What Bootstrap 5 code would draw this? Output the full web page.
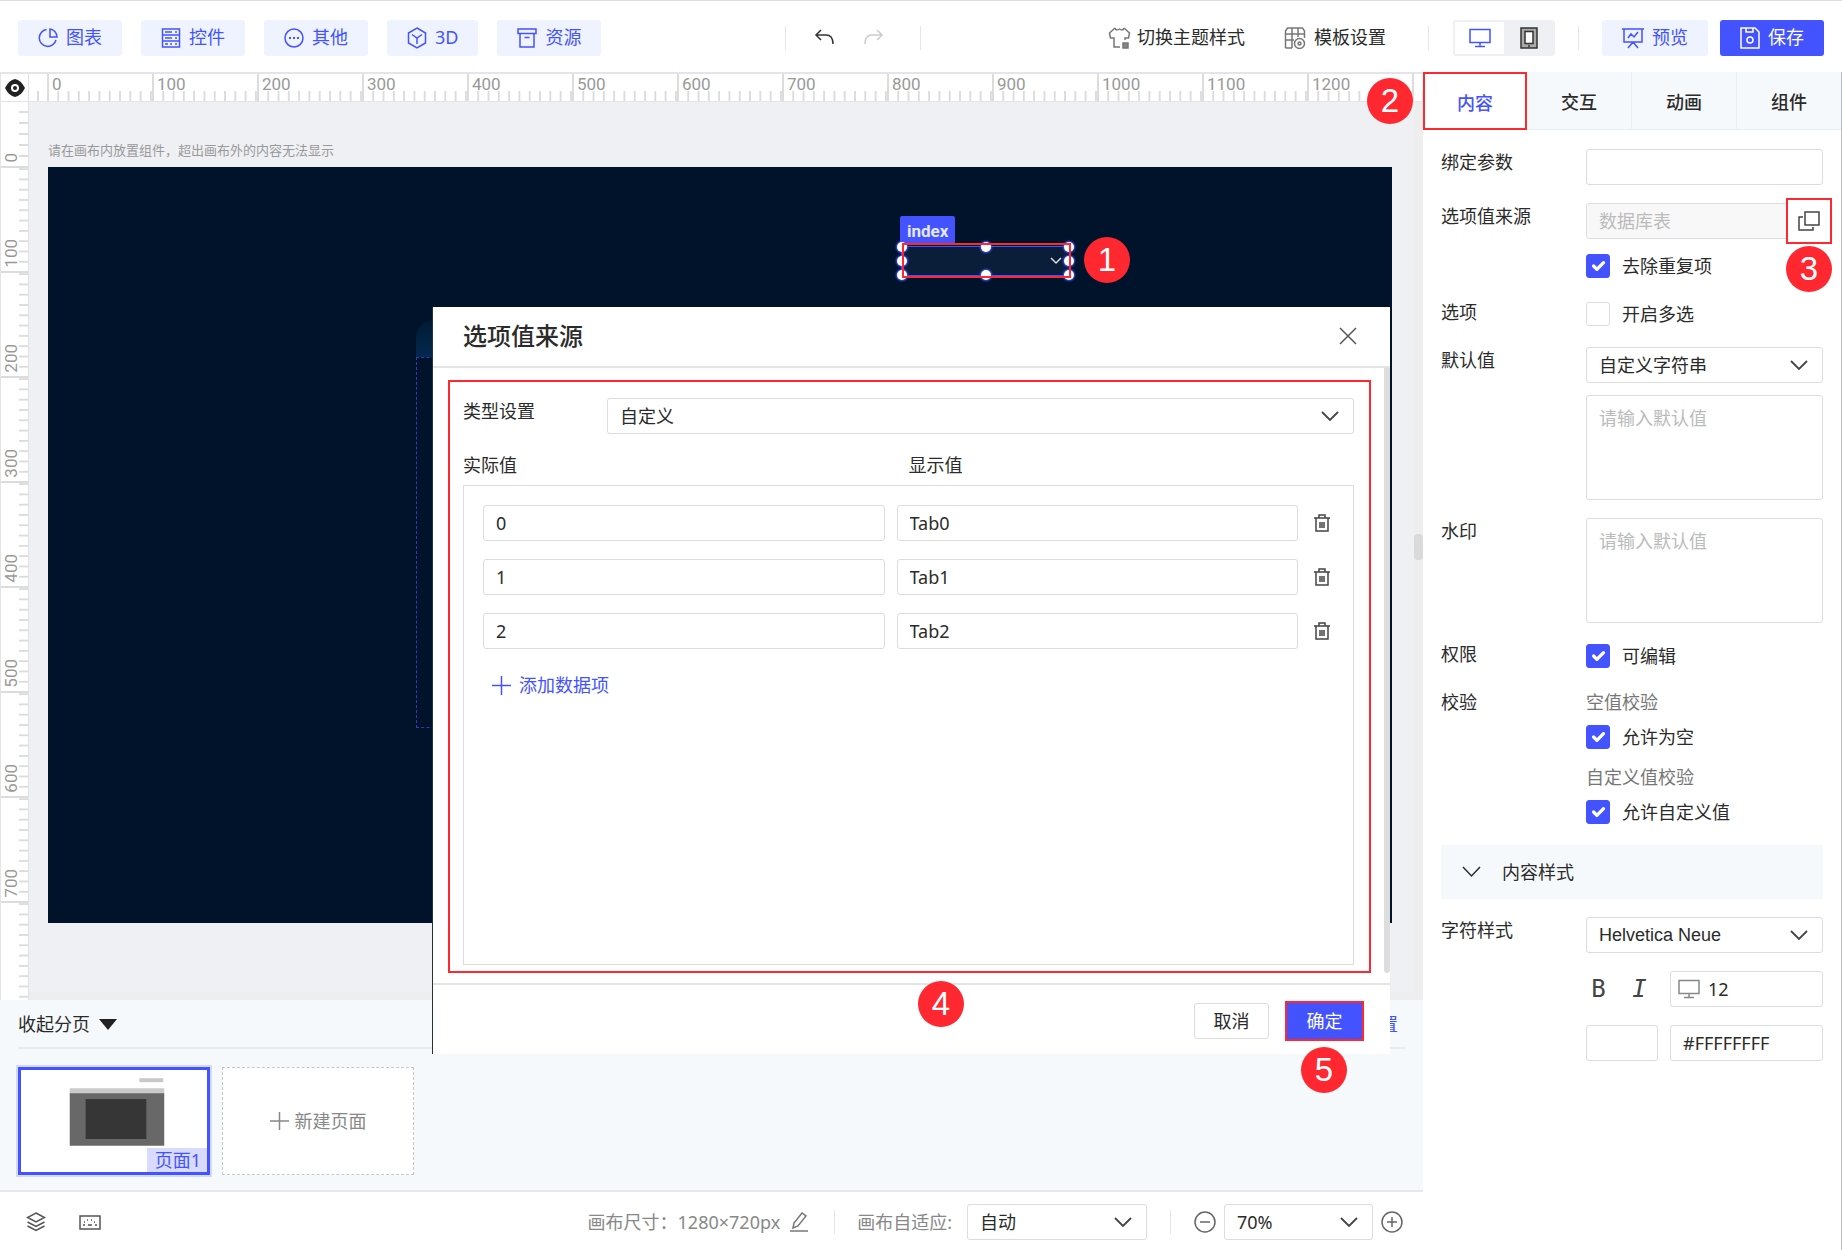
<!DOCTYPE html>
<html lang="zh-CN">
<head>
<meta charset="utf-8">
<meta name="viewport" content="width=device-width, initial-scale=1">
<title>选项值来源</title>
<link href="https://cdn.jsdelivr.net/npm/bootstrap@5.3.0/dist/css/bootstrap.min.css" rel="stylesheet">
<style>
:root{--brand:#4353ff;--brand-soft:#eff3ff;--line:#dcdcdc;--red:#ff2730;--pale:#f6f9fb;--ink:#2b2b2b}
body{font-family:"Noto Sans","Noto Sans CJK SC",sans-serif;font-size:18px;line-height:27px;color:var(--ink);overflow:hidden}
svg{flex:none;fill:none;stroke:currentColor;stroke-width:1.5;display:block}
svg.solid{stroke:none}
button,input,select,textarea{font:inherit}
.plain{border:0;background:none;padding:0;color:inherit}
/* top bar */
.topbar{height:72px;padding:2px 18px 0;border-top:1px solid #dedede}
.tool{--bs-btn-padding-y:0;--bs-btn-padding-x:20px;--bs-btn-font-size:18px;--bs-btn-line-height:27px;--bs-btn-border-width:0;--bs-btn-border-radius:3px;--bs-btn-color:var(--brand);--bs-btn-bg:var(--brand-soft);display:flex;align-items:center;gap:8px;height:36px}
.tool-main{--bs-btn-color:#fff;--bs-btn-bg:var(--brand)}
.sep{width:1px;height:24px;background:#e6e6ea;flex:none}
.history{margin-left:184px;gap:26px}
.device{background:#eff0f4;padding:2px;border-radius:3px;height:36px}
.device button{width:49px;display:flex;align-items:center;justify-content:center}
.device .on{background:#fff;color:var(--brand)}
/* rulers */
.ruler{height:30px;border-top:2px solid #e4e5ea;border-bottom:1px solid #e4e4e8;overflow:hidden;color:#999;font-family:Roboto,sans-serif;font-size:17px}
.corner{width:29px;border-right:1px solid #e0e0e6;border-left:1px solid #e4e4e8;color:#222;flex:none}
.hseg{flex:none;width:105px;border-left:2px solid #dcdcdc;padding-left:3px;line-height:20px;background:linear-gradient(to right,#dcdcdc 2px,transparent 2px) -2px 100%/10% 10px repeat-x}
.hlead{width:18px;border:0;background-size:11px 10px;background-position:8px 100%}
.vruler{width:29px;border-right:1px solid #e0e0e6;border-left:1px solid #e4e4e8;overflow:hidden;color:#999;font-family:Roboto,sans-serif;font-size:17px;flex:none}
.vseg{flex:none;height:105px;border-bottom:2px solid #dcdcdc;display:flex;align-items:flex-end;padding-bottom:3px;background:linear-gradient(to top,#dcdcdc 2px,transparent 2px) 100% calc(100% + 2px)/9px 10% repeat-y}
.vseg span{writing-mode:vertical-rl;transform:rotate(180deg);line-height:20px}
.vlead{height:66px;background-size:9px 11px}
/* stage */
.stage{background:#eff0f4;padding:38px 31px 0 19px}
.hint{font-size:13px;line-height:20px;color:#999;margin-bottom:7px}
.board{background:#00132b;aspect-ratio:16/9}
.vbar{right:0;top:0;bottom:0;width:9px;background:#eee}
.vbar i{position:absolute;top:432px;left:0;right:0;height:26px;border-radius:4px;background:#dadada}
.hbar{left:0;right:0;bottom:0;height:8px;background:#eee}
.widget{left:853px;top:79px;width:169px;height:30px;background:#0a1e3a;border:1px solid var(--brand);color:#ddd;padding-right:7px}
.tagname{left:-2px;bottom:31px;height:28px;padding:0 7px;background:var(--brand);color:#e6e8ff;font:bold 17px/31px Roboto,"Liberation Sans",sans-serif;border-radius:2px}
.knob{width:10px;height:10px;border-radius:50%;background:#fff;box-shadow:0 0 2px 1px var(--brand);transform:translate(-50%,-50%)}
.markbox{border:2px solid var(--red);inset:-4px -2px -3px 0}
.ghost-tab{left:368px;top:153px;width:40px;height:37px;background:linear-gradient(#001a34,#04294f);border-radius:18px 0 0 0}
.ghost{left:368px;top:190px;width:40px;height:371px;border:1px dashed #3538b8}
/* callouts */
.ring{outline:2px solid var(--red);outline-offset:-2px}
.step{position:absolute;width:46px;height:46px;border-radius:50%;background:var(--red);color:#fff;font:33px/46px "Liberation Sans",Arial,sans-serif;text-align:center;z-index:20}
/* pages strip */
.pages{height:192px;background:var(--pale);padding:0 18px;border-bottom:2px solid #e6e8ee;flex:none}
.pages-head{height:49px;padding-top:2px;border-bottom:2px solid #e9ecef}
.tri{width:0;height:0;border:9px solid transparent;border-top:11px solid #222;border-bottom:0}
.set-link{color:var(--brand);margin-right:7px}
.page-tile{width:192px;height:108px;background:#fff}
.page-on{border:3px solid var(--brand);box-shadow:0 0 0 2px #d3d8ff;padding:0}
.page-new{border:1px dashed #c8c8c8;color:#888;display:flex;align-items:center;justify-content:center;gap:6px}
.page-name{right:0;bottom:0;background:#d8dbff;color:var(--brand);padding:0 6px 0 8px;line-height:24px}
.statusbar{height:58px;padding:2px 20px 0 26px;color:#888;flex:none}
/* form controls */
.fc{height:36px;padding:0 12px;border:1px solid var(--line);border-radius:3px;font-size:18px;line-height:27px;color:var(--ink);background-color:#fff}
textarea.fc{height:105px;padding:9px 12px;resize:none;display:block}
.fc::placeholder{color:#bbb}
.fc:disabled{background-color:#f8f8f8}
select.fc{background-image:url("data:image/svg+xml,%3Csvg xmlns='http://www.w3.org/2000/svg' viewBox='0 0 18 18'%3E%3Cpath d='M1 5l8 8 8-8' fill='none' stroke='%23444' stroke-width='1.8'/%3E%3C/svg%3E");background-repeat:no-repeat;background-position:right 14px center;background-size:18px 18px}
.check-line{height:30px;gap:12px}
.check-line .form-check-input{width:24px;height:24px;margin:0;border-radius:3px;border-color:var(--line);box-shadow:none}
.check-line .form-check-input:checked{background-color:var(--brand);border-color:var(--brand)}
/* property panel */
.side{width:419px;border-right:1px solid #b9bcc4;background:#fff;flex:none}
.side-tabs{height:58px}
.side-tabs button{flex:1 1 0;padding-top:4px;background:var(--pale);border-right:1px solid #e9eef2;border-bottom:1px solid #e9eef2;font-weight:500}
.side-tabs .on{background:#fff;color:var(--brand);border:0}
.side-body{padding:19px 18px 0}
.prop{display:flex;margin-bottom:18px}
.prop>.name{width:145px;flex:none}
.prop>.value{flex:1 1 0;min-width:0}
.fold{height:54px;background:var(--pale);padding:0 21px;gap:21px;margin-bottom:18px}
.glyph{font:24px/36px "DejaVu Sans Mono",monospace;width:25px;color:#444}
.swatch{width:72px}
.gap-style{gap:16px}
/* dialog */
.dlg{left:433px;right:33px;top:235px;background:#fff;box-shadow:-1px 0 0 #27303f;z-index:10}
.dlg-head{height:61px;padding:0 33px 2px 30px;border-bottom:2px solid #e4e4e4}
.dlg-head h2{font-size:24px;font-weight:500;line-height:36px}
.dlg-body{padding:12px 19px 10px 15px}
.dlg-scroll{right:0;top:0;bottom:10px;width:6px;background:#ddd;border-radius:0 0 3px 3px}
.dlg-frame{border:2px solid var(--red);padding:16px 15px 6px 13px}
.dlg-frame .kind{width:144px;flex:none}
.items{border:1px solid var(--line);padding:19px;min-height:480px;gap:18px}
.items .line{gap:12px}
.trash{width:24px;flex:none;color:#444}
.add{color:var(--brand);gap:8px;height:36px;padding-left:9px}
.dlg-foot{height:71px;border-top:2px solid #e4e4e4;padding:18px 28px 0;gap:18px}
.dlg-foot .btn{height:36px;width:75px;padding:0;font-size:18px;line-height:27px;border-radius:3px}
.dlg-foot .no{border-color:var(--line);color:var(--ink)}
.dlg-foot .yes{background:var(--brand);color:#fff;border:0;border-radius:0;outline-offset:0}
</style>
</head>
<body class="vh-100 d-flex flex-column bg-white">

<header class="topbar d-flex align-items-center flex-shrink-0">
  <nav class="d-flex" style="gap:19px">
    <button class="btn tool"><svg width="20" height="22" viewBox="0 0 20 22"><path d="M8.500 2.500A8.500 8.500 0 1 0 18 13M12 2v8h7a8 8 0 0 0-7-8z"/></svg>图表</button>
    <button class="btn tool"><svg width="20" height="22" viewBox="0 0 20 22"><path d="M1.500 2h17v18h-17zM1.500 8h17M1.500 14h17M4 5h7M14 5h2M4 11h7M14 11h2M4 17h3M9 17h2M14 17h2"/></svg>控件</button>
    <button class="btn tool"><svg width="20" height="22" viewBox="0 0 20 22"><circle cx="10" cy="11" r="9"/><path d="M5 11h2M9 11h2M13 11h2" stroke-width="2"/></svg>其他</button>
    <button class="btn tool"><svg width="20" height="22" viewBox="0 0 20 22"><path d="M10 1l8.500 5v10L10 21l-8.500-5V6zM5 7.500l5 3.500 5-3.500M10 11v6"/></svg>3D</button>
    <button class="btn tool"><svg width="20" height="22" viewBox="0 0 20 22"><path d="M1 2h18v4.500H1zM3 6.500h14V20H3zM7.500 10.500h5"/></svg>资源</button>
  </nav>
  <div class="history d-flex align-items-center">
    <span class="sep"></span>
    <button class="plain" aria-label="撤销" style="color:#333"><svg width="24" height="22" viewBox="0 0 24 22" stroke-width="2"><path d="M9 3L4 8l5 5M4 8h10c5 0 7 3 7 9"/></svg></button>
    <button class="plain" aria-label="重做" style="color:#ccc"><svg width="24" height="22" viewBox="0 0 24 22" stroke-width="2"><path d="M15 3l5 5-5 5M20 8H10c-5 0-7 3-7 9"/></svg></button>
    <span class="sep ms-2"></span>
  </div>
  <div class="d-flex align-items-center ms-auto">
    <button class="plain d-flex align-items-center" style="gap:6px"><svg width="23" height="24" viewBox="0 0 23 24" style="color:#777"><path d="M7 2L1.500 7l1 5H6v9h6M16 2l5.500 5-1 5H17v2M7 2c1 3 3 2 4.500 1C13 4 15 5 16 2"/><path d="M15 17h5v5h-5z" fill="#888"/></svg>切换主题样式</button>
    <button class="plain d-flex align-items-center" style="gap:8px;margin-left:39px"><svg width="22" height="24" viewBox="0 0 22 24" style="color:#777"><path d="M1.500 22V5l2-3h15l2 3v7M1.500 8h19M8 2v20M14 2v9M1.500 14H10M1.500 22H8"/><circle cx="15.500" cy="17.500" r="5"/><circle cx="15.500" cy="17.500" r="1.500"/></svg>模板设置</button>
    <span class="sep" style="margin:0 24px 0 42px"></span>
    <div class="device d-flex">
      <button class="plain on" aria-label="桌面端"><svg width="22" height="20" viewBox="0 0 22 20"><path d="M1 1.500h20v13H1zM11 15v3M6 18.500h10"/></svg></button>
      <button class="plain" aria-label="移动端"><svg width="18" height="22" viewBox="0 0 18 22" style="color:#333"><path d="M1 1h16v20H1z" fill="#aaa"/><path d="M5 4.500h8v12H5z" fill="#fff"/><path d="M8 19h2"/></svg></button>
    </div>
    <span class="sep" style="margin:0 23px"></span>
    <button class="btn tool"><svg width="22" height="22" viewBox="0 0 22 22"><path d="M0 2h22M2 2h18v13H2zM6 11l3-4 3 3 4-5M11 15l-5 6M11 15l5 6"/></svg>预览</button>
    <button class="btn tool tool-main" style="margin-left:12px"><svg width="20" height="22" viewBox="0 0 20 22"><path d="M1 1h14l4 4v16H1zM6 1v4h7V1"/><circle cx="10" cy="13" r="3"/></svg>保存</button>
  </div>
</header>

<div class="d-flex flex-grow-1" style="min-height:0">
  <main class="flex-grow-1 d-flex flex-column position-relative" style="min-width:0">
    <div class="ruler d-flex flex-shrink-0">
      <div class="corner d-flex align-items-center justify-content-center"><svg class="solid" width="20" height="18" viewBox="0 0 20 18"><path d="M0 9Q4 1 10 0q6 1 10 9-4 8-10 9Q4 17 0 9z" fill="#222"/><circle cx="10" cy="9" r="4" fill="#fff"/><circle cx="10" cy="9" r="2" fill="#222"/></svg></div>
      <div class="hseg hlead"></div>
      <div class="hseg">0</div><div class="hseg">100</div><div class="hseg">200</div><div class="hseg">300</div><div class="hseg">400</div><div class="hseg">500</div><div class="hseg">600</div><div class="hseg">700</div><div class="hseg">800</div><div class="hseg">900</div><div class="hseg">1000</div><div class="hseg">1100</div><div class="hseg">1200</div><div class="hseg"></div>
    </div>
    <div class="d-flex flex-grow-1" style="min-height:0">
      <div class="vruler d-flex flex-column">
        <div class="vseg vlead"><span>0</span></div><div class="vseg"><span>100</span></div><div class="vseg"><span>200</span></div><div class="vseg"><span>300</span></div><div class="vseg"><span>400</span></div><div class="vseg"><span>500</span></div><div class="vseg"><span>600</span></div><div class="vseg"><span>700</span></div><div class="vseg"></div>
      </div>
      <section class="stage flex-grow-1 position-relative overflow-hidden">
        <p class="hint">请在画布内放置组件，超出画布外的内容无法显示</p>
        <div class="board position-relative">
          <div class="ghost-tab position-absolute"></div>
          <div class="ghost position-absolute"></div>
          <div class="widget position-absolute d-flex align-items-center justify-content-end">
            <span class="tagname position-absolute">index</span>
            <svg width="12" height="8" viewBox="0 0 12 8"><path d="M1 1l5 5 5-5"/></svg>
            <i class="knob position-absolute top-0 start-0"></i><i class="knob position-absolute top-0 start-50"></i><i class="knob position-absolute top-0 start-100"></i>
            <i class="knob position-absolute top-50 start-0"></i><i class="knob position-absolute top-50 start-100"></i>
            <i class="knob position-absolute top-100 start-0"></i><i class="knob position-absolute top-100 start-50"></i><i class="knob position-absolute top-100 start-100"></i>
            <span class="markbox position-absolute"></span>
            <span class="step" style="left:182px;top:-10px">1</span>
          </div>
        </div>
        <div class="hbar position-absolute"></div>
        <div class="vbar position-absolute"><i></i></div>
      </section>
    </div>

    <section class="pages">
      <div class="pages-head d-flex align-items-center">
        <button class="plain d-flex align-items-center" style="gap:9px">收起分页<i class="tri"></i></button>
        <a class="set-link text-decoration-none ms-auto" href="#">设置</a>
      </div>
      <div class="d-flex" style="gap:12px;padding-top:18px">
        <button class="page-tile page-on position-relative" aria-label="页面1">
          <svg class="solid w-100 h-100" viewBox="0 0 187 102"><path d="M119 8h24v4h-24z" fill="#c8c8c8"/><path d="M49 18h95v6H49z" fill="#cacaca"/><path d="M49 23h95v53H49z" fill="#686868"/><path d="M65 29h61v40H65z" fill="#363636"/></svg>
          <span class="page-name position-absolute">页面1</span>
        </button>
        <button class="page-tile page-new"><svg width="19" height="18" viewBox="0 0 19 18"><path d="M0 9h19M9.500 0v18"/></svg>新建页面</button>
      </div>
    </section>

    <footer class="statusbar d-flex align-items-center">
      <button class="plain" aria-label="图层" style="color:#555"><svg width="20" height="20" viewBox="0 0 20 20"><path d="M10 1l8.500 4.500L10 10 1.500 5.500zM1.500 10l8.500 4.500 8.500-4.500M1.500 14l8.500 4.500 8.500-4.500"/></svg></button>
      <button class="plain" aria-label="快捷键" style="color:#555;margin-left:33px"><svg width="22" height="15" viewBox="0 0 22 15"><path d="M1 1h20v13H1zM4 10h2M9 10h4M16 10h2M8 5h1M12 5h1M5 7h1M15 7h1"/></svg></button>
      <span class="ms-auto">画布尺寸：1280×720px</span>
      <button class="plain" aria-label="编辑尺寸" style="color:#777;margin-left:9px"><svg width="20" height="20" viewBox="0 0 20 20"><path d="M4 16l1-5 8-10 4 3-8 10zM1 19h18"/></svg></button>
      <span class="sep" style="margin:0 22px 0 25px"></span>
      <label for="fit">画布自适应:</label>
      <select id="fit" class="form-select fc" style="width:180px;margin-left:15px"><option>自动</option></select>
      <span class="sep" style="margin:0 23px"></span>
      <button class="plain" aria-label="缩小" style="color:#666"><svg width="22" height="22" viewBox="0 0 22 22"><circle cx="11" cy="11" r="10"/><path d="M6 11h10"/></svg></button>
      <select class="form-select fc" aria-label="缩放" style="width:149px;margin:0 8px"><option>70%</option></select>
      <button class="plain" aria-label="放大" style="color:#666"><svg width="22" height="22" viewBox="0 0 22 22"><circle cx="11" cy="11" r="10"/><path d="M6 11h10M11 6v10"/></svg></button>
    </footer>

    <div class="dlg position-absolute" role="dialog" aria-labelledby="dlgTitle">
      <div class="dlg-head d-flex align-items-center justify-content-between">
        <h2 id="dlgTitle" class="mb-0">选项值来源</h2>
        <button class="plain" aria-label="关闭" style="color:#555"><svg width="18" height="18" viewBox="0 0 18 18"><path d="M1 1l16 16M17 1L1 17"/></svg></button>
      </div>
      <div class="dlg-body position-relative">
        <div class="dlg-frame">
          <div class="d-flex">
            <label class="kind" for="kind">类型设置</label>
            <select id="kind" class="form-select fc"><option>自定义</option></select>
          </div>
          <div class="d-flex" style="margin:18px 0 6px"><span class="w-50">实际值</span><span class="w-50">显示值</span></div>
          <div class="items d-flex flex-column">
            <div class="line d-flex align-items-center"><input class="form-control fc" aria-label="实际值" value="0"><input class="form-control fc" aria-label="显示值" value="Tab0"><button class="plain trash" aria-label="删除"><svg width="18" height="18" viewBox="0 0 18 18" class="mx-auto"><path d="M1 4h16M3 4v13h12V4M6 4V1h6v3M7 8v6M9 8v6M11 8v6"/></svg></button></div>
            <div class="line d-flex align-items-center"><input class="form-control fc" aria-label="实际值" value="1"><input class="form-control fc" aria-label="显示值" value="Tab1"><button class="plain trash" aria-label="删除"><svg width="18" height="18" viewBox="0 0 18 18" class="mx-auto"><path d="M1 4h16M3 4v13h12V4M6 4V1h6v3M7 8v6M9 8v6M11 8v6"/></svg></button></div>
            <div class="line d-flex align-items-center"><input class="form-control fc" aria-label="实际值" value="2"><input class="form-control fc" aria-label="显示值" value="Tab2"><button class="plain trash" aria-label="删除"><svg width="18" height="18" viewBox="0 0 18 18" class="mx-auto"><path d="M1 4h16M3 4v13h12V4M6 4V1h6v3M7 8v6M9 8v6M11 8v6"/></svg></button></div>
            <button class="plain add d-flex align-items-center align-self-start"><svg width="19" height="19" viewBox="0 0 19 19"><path d="M0 9.500h19M9.500 0v19"/></svg>添加数据项</button>
          </div>
        </div>
        <div class="dlg-scroll position-absolute"></div>
      </div>
      <div class="dlg-foot d-flex justify-content-end">
        <button class="btn no">取消</button>
        <button class="btn yes ring position-relative">确定<span class="step" style="left:14px;top:44px">5</span></button>
      </div>
      <span class="step" style="left:485px;bottom:27px">4</span>
    </div>
  </main>

  <aside class="side d-flex flex-column">
    <div class="side-tabs d-flex">
      <button class="plain on ring position-relative">内容<span class="step" style="left:-56px;top:6px">2</span></button>
      <button class="plain">交互</button>
      <button class="plain">动画</button>
      <button class="plain border-end-0">组件</button>
    </div>
    <div class="side-body">
      <div class="prop"><label class="name" for="bind">绑定参数</label><div class="value"><input id="bind" class="form-control fc"></div></div>
      <div class="prop"><label class="name" for="src">选项值来源</label>
        <div class="value">
          <div class="position-relative">
            <input id="src" class="form-control fc" placeholder="数据库表" disabled>
            <button class="plain ring position-absolute bg-white d-flex align-items-center justify-content-center" aria-label="设置来源" style="width:46px;height:46px;right:-9px;top:-5px;color:#444"><svg width="22" height="20" viewBox="0 0 22 20"><path d="M7 1h14v13H7zM5 6H1v13h14v-3"/></svg></button>
            <span class="step" style="right:-9px;top:43px">3</span>
          </div>
          <div class="check-line d-flex align-items-center" style="margin-top:12px"><input class="form-check-input" type="checkbox" id="dedupe" checked><label for="dedupe">去除重复项</label></div>
        </div></div>
      <div class="prop"><span class="name">选项</span><div class="value check-line d-flex align-items-center"><input class="form-check-input" type="checkbox" id="multi"><label for="multi">开启多选</label></div></div>
      <div class="prop"><label class="name" for="def">默认值</label>
        <div class="value"><select id="def" class="form-select fc"><option>自定义字符串</option></select><textarea class="form-control fc" aria-label="默认值" placeholder="请输入默认值" style="margin-top:12px"></textarea></div></div>
      <div class="prop"><label class="name" for="water">水印</label><div class="value"><textarea id="water" class="form-control fc" placeholder="请输入默认值"></textarea></div></div>
      <div class="prop"><span class="name">权限</span><div class="value check-line d-flex align-items-center"><input class="form-check-input" type="checkbox" id="edit" checked><label for="edit">可编辑</label></div></div>
      <div class="prop"><span class="name">校验</span>
        <div class="value">
          <div style="color:#777">空值校验</div>
          <div class="check-line d-flex align-items-center" style="margin:6px 0 12px"><input class="form-check-input" type="checkbox" id="nul" checked><label for="nul">允许为空</label></div>
          <div style="color:#777">自定义值校验</div>
          <div class="check-line d-flex align-items-center" style="margin-top:6px"><input class="form-check-input" type="checkbox" id="cus" checked><label for="cus">允许自定义值</label></div>
        </div></div>
      <button class="plain fold w-100 d-flex align-items-center"><svg width="19" height="12" viewBox="0 0 19 12" stroke-width="2"><path d="M1 1l8.500 9L18 1"/></svg>内容样式</button>
      <div class="prop"><label class="name" for="font">字符样式</label>
        <div class="value d-flex flex-column" style="gap:18px">
          <select id="font" class="form-select fc" style="font-family:'Liberation Sans',Arial,sans-serif"><option>Helvetica Neue</option></select>
          <div class="d-flex" style="gap:12px">
            <div class="d-flex swatch gap-style flex-shrink-0"><button class="plain glyph" aria-label="加粗">B</button><button class="plain glyph fst-italic" aria-label="斜体">I</button></div>
            <div class="position-relative flex-grow-1"><input class="form-control fc" aria-label="字号" value="12" style="padding-left:37px"><svg class="position-absolute" width="22" height="20" viewBox="0 0 22 20" style="left:8px;top:8px;color:#888"><path d="M1 1.500h20v13H1zM11 15v3M6 18.500h10"/></svg></div>
          </div>
          <div class="d-flex" style="gap:12px">
            <button class="fc swatch flex-shrink-0" aria-label="颜色"></button>
            <input class="form-control fc" aria-label="颜色值" value="#FFFFFFFF">
          </div>
        </div></div>
    </div>
  </aside>
</div>
<script src="https://cdn.jsdelivr.net/npm/bootstrap@5.3.0/dist/js/bootstrap.bundle.min.js"></script>
</body>
</html>
